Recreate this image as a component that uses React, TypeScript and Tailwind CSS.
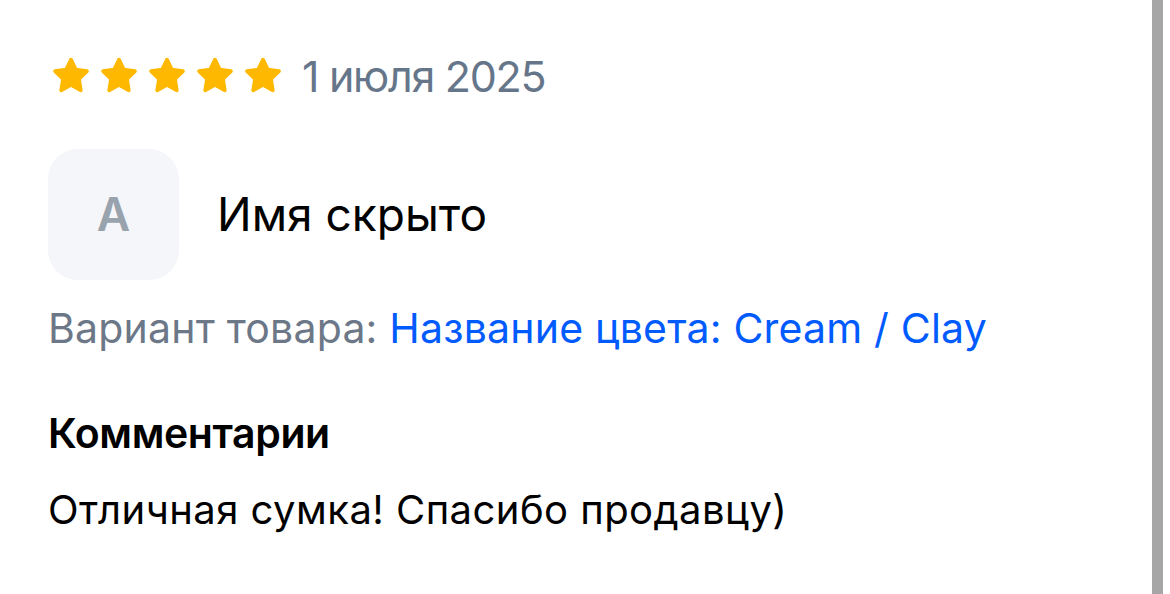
import React from "react";

function Star() {
  return (
    <svg width="40" height="40" viewBox="0 0 24 24" className="shrink-0">
      <polygon
        points="12,2.2 14.9,8.2 21.6,9.1 16.8,13.8 17.9,20.6 12,17.4 6.1,20.6 7.2,13.8 2.4,9.1 9.1,8.2"
        fill="#ffb800"
        stroke="#ffb800"
        strokeWidth="2.2"
        strokeLinejoin="round"
      />
    </svg>
  );
}

function Review() {
  return (
    <div className="flex-1 pl-12 pt-[52px]" style={{ fontFamily: "Inter, 'Noto Sans', sans-serif" }}>
      <div className="flex items-center h-12">
        <div className="flex items-center gap-2 ml-[3px]">
          {[0, 1, 2, 3, 4].map((i) => (
            <Star key={i} />
          ))}
        </div>
        <span className="ml-[19px] text-[43px] leading-[48px] tracking-[-1.3px] text-[#66768a]">1 июля 2025</span>
      </div>

      <div className="flex items-center mt-[49px]">
        <div className="w-[131px] h-[131px] rounded-[30px] bg-[#f5f6f9] flex items-center justify-center">
          <span className="text-[46px] font-semibold text-[#99a3ae]">A</span>
        </div>
        <span className="ml-[38px] text-[46px] text-black">Имя скрыто</span>
      </div>

      <div className="mt-[23px] text-[41px] leading-[50px] tracking-[0.2px]">
        <span className="text-[#6c7887]">Вариант товара: </span>
        <span className="text-[#005bff]">Название цвета: Cream / Clay</span>
      </div>

      <div className="mt-[55px] text-[41px] leading-[50px] font-semibold tracking-[-0.4px] text-black">Комментарии</div>

      <div className="mt-[27px] text-[40px] leading-[50px] tracking-[0.45px] text-black">Отличная сумка! Спасибо продавцу)</div>
    </div>
  );
}

export default function App() {
  return (
    <div className="flex h-[594px] w-[1170px] bg-white overflow-hidden">
      <Review />
      <div className="w-[11px] h-full bg-[#a6a6a6]" />
      <div className="w-[7px] h-full bg-white" />
    </div>
  );
}
